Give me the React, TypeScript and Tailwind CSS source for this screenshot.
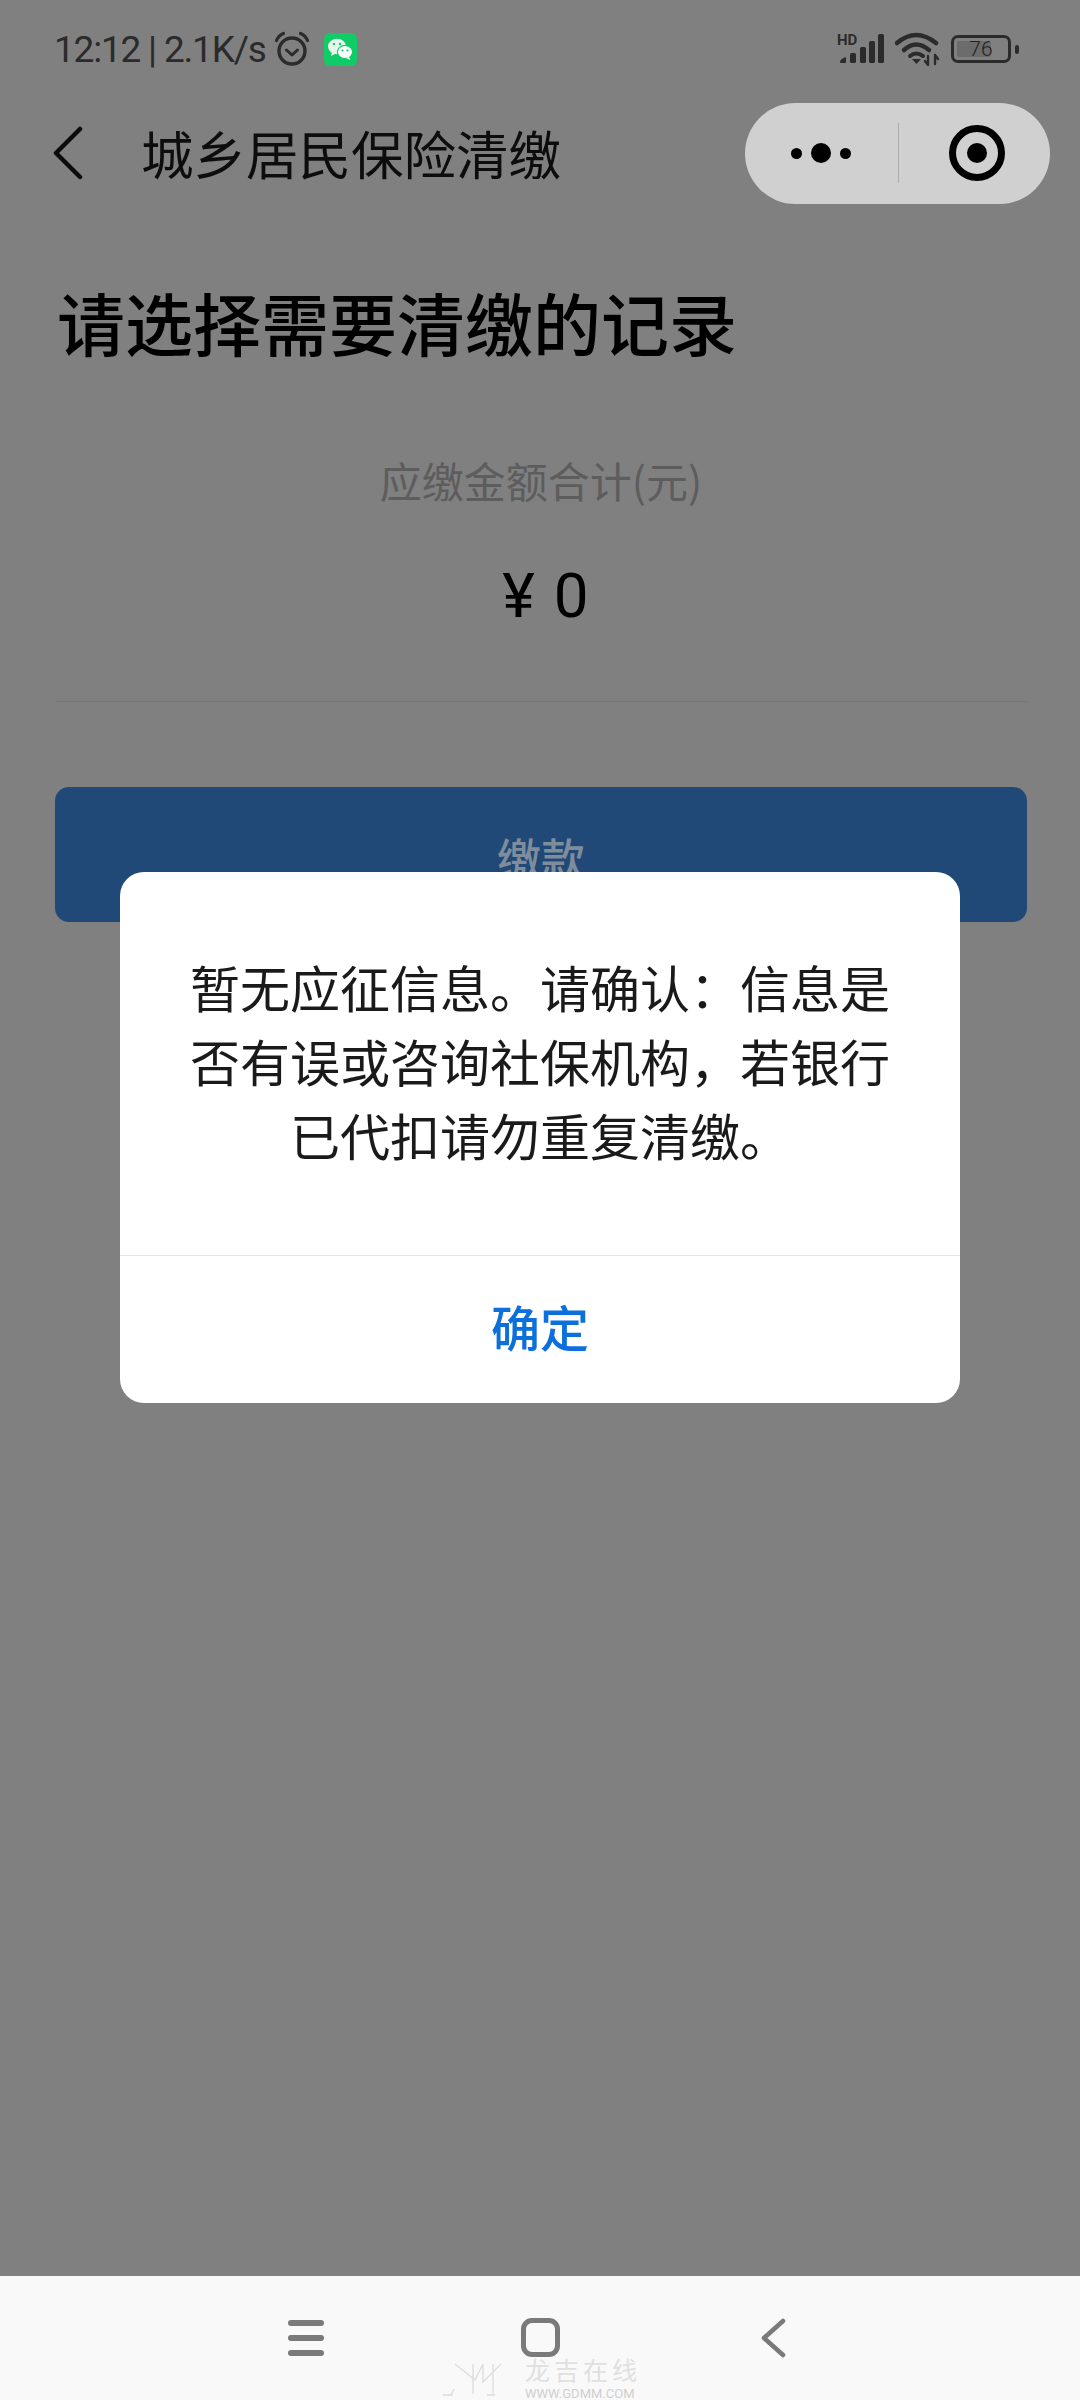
import React from 'react';

const cjk = "font-['Noto_Sans_CJK_SC','Noto_Sans',sans-serif]";

// full-width colon and comma, as the dialog text has them
const dialogText = '暂无应征信息。请确认\uFF1A信息是否有误或咨询社保机构\uFF0C若银行已代扣请勿重复清缴。';

const AlarmIcon = () => (
  <svg width="36" height="36" viewBox="0 0 36 36" fill="none" stroke="#2b2b2b" strokeLinecap="round">
    <circle cx="18" cy="20" r="13" strokeWidth="3.4" />
    <path d="M12.5 19l5.5 5 5.5-5" strokeWidth="3" strokeLinejoin="round" />
    <path d="M2.5 9.5Q4.5 4.5 9.5 2.5M33.5 9.5Q31.5 4.5 26.5 2.5" strokeWidth="3.2" />
  </svg>
);

const WechatIcon = () => (
  <svg width="33" height="33" viewBox="0 0 33 33">
    <rect width="33" height="33" rx="6" fill="#10cc66" />
    <ellipse cx="13" cy="13.5" rx="9" ry="7.8" fill="#e8f5ec" />
    <path d="M8 19l-1 4 5-2.5z" fill="#e8f5ec" />
    <ellipse cx="21" cy="19" rx="7.6" ry="6.6" fill="#fff" stroke="#10cc66" strokeWidth="1.2" />
    <path d="M25 24l1.5 3-4.5-2z" fill="#fff" />
    <circle cx="10" cy="11" r="1.2" fill="#10cc66" />
    <circle cx="16" cy="11" r="1.2" fill="#10cc66" />
    <circle cx="18.5" cy="17.5" r="1.1" fill="#10cc66" />
    <circle cx="23.5" cy="17.5" r="1.1" fill="#10cc66" />
  </svg>
);

const SignalIcon = () => (
  <div className="relative h-[32px] w-[48px]">
    <span className="absolute top-0 left-0 font-['Roboto',sans-serif] text-[15px] leading-[15px] font-bold text-[#2b2b2b]">HD</span>
    <svg width="48" height="32" viewBox="0 0 48 32" fill="#2b2b2b">
      <path d="M3 29q0-3 6-5v5q0 1-1 1H4q-1 0-1-1z" />
      <rect x="13" y="20" width="6" height="10" rx="1.5" />
      <rect x="23" y="14" width="6" height="16" rx="1.5" />
      <rect x="32" y="8" width="6" height="22" rx="1.5" />
      <rect x="41" y="1" width="6" height="29" rx="1.5" />
    </svg>
  </div>
);

const WifiIcon = () => (
  <svg width="46" height="34" viewBox="0 0 46 34" fill="none" stroke="#2b2b2b" strokeLinecap="round">
    <path d="M2 11Q21-5 41 11" strokeWidth="4.5" />
    <path d="M9 18Q21 7 34 18" strokeWidth="4.5" />
    <path d="M15 24Q21 19 28 24" strokeWidth="4" />
    <path d="M17 27h9l-4.5 5z" fill="#2b2b2b" stroke="none" />
    <path d="M33 24v9M30 29l3 4M40 23v9M40 23l3 4" strokeWidth="2.4" />
  </svg>
);

const Battery = () => (
  <div className="flex items-center gap-[4px]">
    <div className="relative flex h-[28px] w-[60px] items-center overflow-hidden rounded-[7px] border-[3px] border-[#2b2b2b] p-[3px]">
      <div className="h-full w-[34px] rounded-[2px] bg-[#6c6c6c]" />
      <span className="absolute inset-0 flex items-center justify-center font-['Roboto',sans-serif] text-[21px] leading-none font-light text-[#222]">
        76
      </span>
    </div>
    <div className="h-[9px] w-[4px] rounded-[2px] bg-[#2b2b2b]" />
  </div>
);

const BackArrow = () => (
  <svg width="30" height="54" viewBox="0 0 30 54" fill="none" stroke="#0b0b0b" strokeWidth="4.5" strokeLinecap="round" strokeLinejoin="round">
    <path d="M27 3L3 27l24 24" />
  </svg>
);

const Capsule = () => (
  <div className="flex h-[101px] w-[305px] items-center rounded-full bg-[#d0d0d0]">
    <div className="flex w-[153px] items-center justify-end gap-[9px] pr-[47px]">
      <span className="h-[11px] w-[11px] rounded-full bg-black" />
      <span className="h-[20px] w-[20px] rounded-full bg-black" />
      <span className="h-[11px] w-[11px] rounded-full bg-black" />
    </div>
    <div className="h-[60px] w-[1px] bg-[#ababab]" />
    <div className="flex flex-1 items-center justify-end">
      <div className="mr-[45px] flex h-[56px] w-[56px] items-center justify-center rounded-full border-[7px] border-black">
        <span className="h-[20px] w-[20px] rounded-full bg-black" />
      </div>
    </div>
  </div>
);

const BottomNav = () => (
  <div className="relative flex h-[124px] items-start bg-[#f9f9f9] pt-[44px] pl-[288px]">
    <div className="flex h-[36px] w-[36px] flex-col justify-between">
      <span className="h-[6px] rounded-full bg-[#7a7a7a]" />
      <span className="h-[6px] rounded-full bg-[#7a7a7a]" />
      <span className="h-[6px] rounded-full bg-[#7a7a7a]" />
    </div>
    <div className="-mt-[2px] ml-[197px] h-[39px] w-[39px] rounded-[11px] border-[5px] border-[#7a7a7a]" />
    <svg className="-mt-[2px] ml-[201px]" width="25" height="40" viewBox="0 0 25 40" fill="none" stroke="#7a7a7a" strokeWidth="4.5" strokeLinecap="round" strokeLinejoin="round">
      <path d="M22 3L3 20l19 17" />
    </svg>

    {/* site watermark stamped on the shot */}
    <div className="absolute top-[80px] left-[443px] flex items-start gap-[16px]">
      <svg className="mt-[4px]" width="66" height="38" viewBox="0 0 66 38" fill="none" stroke="#dcdcdc" strokeWidth="1.3">
        <path d="M12 4l20 16 8-16v18l18-18M30 4v30M50 4v30M0 35h10M44 35h8M8 35l3-6" />
      </svg>
      <div className="flex flex-col items-start">
        <div className={`${cjk} text-[25px] leading-[26px] tracking-[4px] text-[#e0e0e0]`}>龙吉在线</div>
        <div className="mt-[6px] font-['Roboto',sans-serif] text-[13px] leading-[12px] text-[#cfcfcf]">WWW.GDMM.COM</div>
      </div>
    </div>
  </div>
);

const App: React.FC = () => {
  return (
    <div className={`${cjk} relative flex h-[2400px] w-[1080px] flex-col overflow-hidden bg-[#808080]`}>
      {/* status bar */}
      <div className="flex h-[98px] items-center justify-between pr-[61px] pl-[54px]">
        <div className="flex items-center">
          <span className="font-['Roboto',sans-serif] text-[37px] leading-none tracking-[-1.2px] text-[#2b2b2b]">12:12 | 2.1K/s</span>
          <div className="ml-[8px]">
            <AlarmIcon />
          </div>
          <div className="ml-[14px]">
            <WechatIcon />
          </div>
        </div>
        <div className="flex items-center gap-[10px]">
          <SignalIcon />
          <WifiIcon />
          <Battery />
        </div>
      </div>

      {/* mini program header */}
      <div className="flex h-[110px] items-center justify-between pr-[30px] pl-[53px]">
        <div className="flex items-center gap-[58px]">
          <BackArrow />
          <span className="-mt-[2px] text-[52.5px] leading-none text-[#0d0d0d]">城乡居民保险清缴</span>
        </div>
        <Capsule />
      </div>

      <h1 className="mt-[74px] pl-[57px] text-[68px] leading-[80px] font-medium text-black">请选择需要清缴的记录</h1>

      <div className="mt-[88px] pl-[2px] text-center text-[42px] leading-[60px] text-[#5d5d5d]">应缴金额合计(元)</div>
      <div className="mt-[46px] flex items-center justify-center pl-[11px] font-['Roboto',sans-serif] text-[62px] leading-[80px] text-black">
        <span>¥</span>
        <span className="ml-[19px]">0</span>
      </div>

      <div className="mt-[65px] mr-[53px] ml-[55px] h-[1px] bg-[#777777]" />

      <div className="mt-[85px] mr-[53px] ml-[55px] flex h-[135px] items-start justify-center rounded-[14px] bg-[#204978] pt-[40px] text-[44px] leading-[60px] font-medium text-[#7f8c9b]">
        缴款
      </div>

      <div className="flex-1" />
      <BottomNav />

      {/* alert dialog */}
      <div className="absolute top-[872px] left-[120px] flex h-[531px] w-[840px] flex-col rounded-[24px] bg-white">
        <div className="flex h-[384px] items-center justify-center border-b border-[#e4e4e4] pb-[8px]">
          <p className="w-[700px] text-center text-[50px] leading-[74px] text-[#1a1a1a]">{dialogText}</p>
        </div>
        <div className="flex flex-1 items-center justify-center pb-[8px] text-[49px] leading-none font-medium text-[#0b6fdc]">确定</div>
      </div>
    </div>
  );
};

export default App;
